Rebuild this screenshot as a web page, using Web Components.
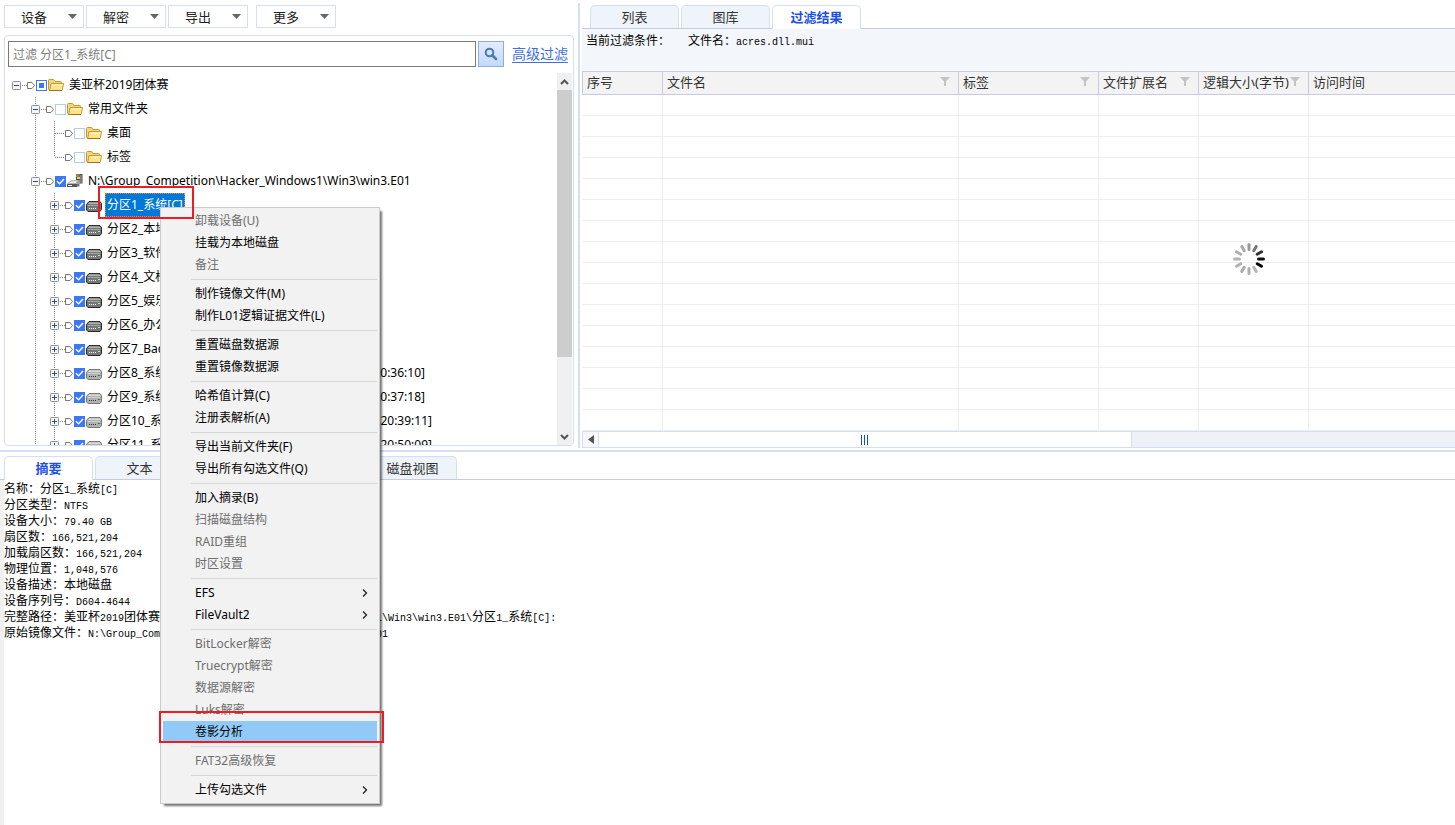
<!DOCTYPE html>
<html lang="zh-CN">
<head>
<meta charset="utf-8">
<title>取证分析</title>
<style>
  html, body { margin: 0; }
  body { font: 12px/16px "Noto Sans", "Noto Sans CJK SC", sans-serif; color: #000; background: #fff; }
  forensic-app { min-height: 100vh; }
  context-menu { left: 160px; top: 207px; }
  .mark-node { left: 98px; top: 186px; width: 92px; height: 29px; }
  .mark-menu { left: 159px; top: 711px; width: 221px; height: 28px; }
</style>
</head>
<body>
<forensic-app>
  <device-pane slot="left">
    <drop-button slot="tools">设备</drop-button>
    <drop-button slot="tools">解密</drop-button>
    <drop-button slot="tools">导出</drop-button>
    <drop-button slot="tools" apart>更多</drop-button>
    <tree-node state="mixed" icon="folder" toggle="minus" root label="美亚杯2019团体赛">
      <tree-node icon="folder" toggle="minus" label="常用文件夹">
        <tree-node icon="folder" label="桌面"></tree-node>
        <tree-node icon="folder" label="标签" last></tree-node>
      </tree-node>
      <tree-node state="checked" icon="image" toggle="minus" label="N:\Group_Competition\Hacker_Windows1\Win3\win3.E01">
        <tree-node state="checked" icon="drive" toggle="plus" label="分区1_系统[C]" selected></tree-node>
        <tree-node state="checked" icon="drive" toggle="plus" label="分区2_本地"></tree-node>
        <tree-node state="checked" icon="drive" toggle="plus" label="分区3_软件"></tree-node>
        <tree-node state="checked" icon="drive" toggle="plus" label="分区4_文档"></tree-node>
        <tree-node state="checked" icon="drive" toggle="plus" label="分区5_娱乐"></tree-node>
        <tree-node state="checked" icon="drive" toggle="plus" label="分区6_办公"></tree-node>
        <tree-node state="checked" icon="drive" toggle="plus" label="分区7_Bac"></tree-node>
        <tree-node state="checked" icon="shadow" toggle="plus" label="分区8_系统" time="20:36:10]"></tree-node>
        <tree-node state="checked" icon="shadow" toggle="plus" label="分区9_系统" time="20:37:18]"></tree-node>
        <tree-node state="checked" icon="shadow" toggle="plus" label="分区10_系统" time="20:39:11]" wide></tree-node>
        <tree-node state="checked" icon="shadow" toggle="plus" label="分区11_系统" time="20:50:09]" wide></tree-node>
      </tree-node>
    </tree-node>
  </device-pane>

  <result-pane slot="right">
    <tab-item slot="tabs">列表</tab-item>
    <tab-item slot="tabs">图库</tab-item>
    <tab-item slot="tabs" active>过滤结果</tab-item>
  </result-pane>

  <detail-pane slot="bottom">
    <tab-item slot="tabs" active>摘要</tab-item>
    <tab-item slot="tabs">文本</tab-item>
    <tab-item slot="tabs" name="十六进制"></tab-item>
    <tab-item slot="tabs" name="预览"></tab-item>
    <tab-item slot="tabs">磁盘视图</tab-item>
    <detail-line>名称：分区<code>1_</code>系统<code>[C]</code></detail-line>
    <detail-line>分区类型：<code>NTFS</code></detail-line>
    <detail-line>设备大小：<code>79.40 GB</code></detail-line>
    <detail-line>扇区数：<code>166,521,204</code></detail-line>
    <detail-line>加载扇区数：<code>166,521,204</code></detail-line>
    <detail-line>物理位置：<code>1,048,576</code></detail-line>
    <detail-line>设备描述：本地磁盘</detail-line>
    <detail-line>设备序列号：<code>D604-4644</code></detail-line>
    <detail-line>完整路径：美亚杯<code>2019</code>团体赛<code>\N:\Group_Competition\Hacker_Windows1\Win3\win3.E01\</code>分区<code>1_</code>系统<code>[C]:</code></detail-line>
    <detail-line>原始镜像文件：<code>N:\Group_Competition\Hacker_Windows1\Win3\win3.E01</code></detail-line>
  </detail-pane>
</forensic-app>

<context-menu>
  <menu-entry disabled>卸载设备(U)</menu-entry>
  <menu-entry>挂载为本地磁盘</menu-entry>
  <menu-entry disabled>备注</menu-entry>
  <menu-rule></menu-rule>
  <menu-entry>制作镜像文件(M)</menu-entry>
  <menu-entry>制作L01逻辑证据文件(L)</menu-entry>
  <menu-rule></menu-rule>
  <menu-entry>重置磁盘数据源</menu-entry>
  <menu-entry>重置镜像数据源</menu-entry>
  <menu-rule></menu-rule>
  <menu-entry>哈希值计算(C)</menu-entry>
  <menu-entry>注册表解析(A)</menu-entry>
  <menu-rule></menu-rule>
  <menu-entry>导出当前文件夹(F)</menu-entry>
  <menu-entry>导出所有勾选文件(Q)</menu-entry>
  <menu-rule></menu-rule>
  <menu-entry>加入摘录(B)</menu-entry>
  <menu-entry disabled>扫描磁盘结构</menu-entry>
  <menu-entry disabled>RAID重组</menu-entry>
  <menu-entry disabled>时区设置</menu-entry>
  <menu-rule></menu-rule>
  <menu-entry more>EFS</menu-entry>
  <menu-entry more>FileVault2</menu-entry>
  <menu-rule></menu-rule>
  <menu-entry disabled>BitLocker解密</menu-entry>
  <menu-entry disabled>Truecrypt解密</menu-entry>
  <menu-entry disabled>数据源解密</menu-entry>
  <menu-entry disabled>Luks解密</menu-entry>
  <menu-entry current>卷影分析</menu-entry>
  <menu-rule></menu-rule>
  <menu-entry disabled>FAT32高级恢复</menu-entry>
  <menu-rule></menu-rule>
  <menu-entry more>上传勾选文件</menu-entry>
</context-menu>
<red-mark class="mark-node"></red-mark>
<red-mark class="mark-menu"></red-mark>

<script>
const define = (name, render, after) => customElements.define(name, class extends HTMLElement {
  constructor() { super(); this.attachShadow({ mode: 'open' }); }
  connectedCallback() {
    if (this.shadowRoot.childNodes.length) return;
    this.shadowRoot.innerHTML = render(this);
    if (after) after(this);
  }
});

const icons = {
  folder: `<svg width="16" height="16" viewBox="0 0 16 16" aria-hidden="true">
    <path d="M.5 12.500V3.500Q.5 2.500 1.500 2.500H5.500L7 4.500H12.500Q13.500 4.500 13.500 5.500V7" fill="#f3d878" stroke="#c6962c"/>
    <path d="M1 13.500Q2.500 12 2.500 9.500V8Q2.500 6.500 4 6.500H15.500L14.500 12.500Q14.300 13.500 13.300 13.500Z" fill="#fbe388" stroke="#c6962c"/>
    <path d="M4 8H14.500" stroke="#fffbe0"/><path d="M2 13.500H14" stroke="#a0701a"/></svg>`,
  image: `<svg width="16" height="16" viewBox="0 0 16 16" aria-hidden="true">
    <path d="M9 1H15.500V10.500H9Z" fill="#4c4c4c"/><path d="M9 1H12.500V4H9Z" fill="#8f8a48"/><path d="M10 4H13V6H10Z" fill="#e4d64c"/>
    <path d="M14 2V10" stroke="#aaa"/><path d="M9 7H13V10H9Z" fill="#999"/>
    <path d="M.5 10.500L5 7.500H11L9 10.500Z" fill="#e8e8e8" stroke="#b5b5b5"/>
    <path d="M0 11H10V14H0Z" fill="#555"/><path d="M1 12.500H5" stroke="#eee"/><path d="M10 11H12.500V13.500H10Z" fill="#777"/></svg>`,
  drive: `<svg width="16" height="16" viewBox="0 0 16 16" aria-hidden="true">
    <path d="M.5 7.500L3 4.500H14L15.500 6.500V12.500L14 14.500H2L.5 13Z" fill="#777" stroke="#2b2b2b"/>
    <path d="M2 7L3.500 5.500H13.500L14.500 7Z" fill="#b5b5b5"/><path d="M1.500 8.500H14" stroke="#a5a5a5"/>
    <path d="M3 11.500H10" stroke="#fff" stroke-dasharray="1 1"/><path d="M12 10.500H14" stroke="#b8f0b8"/></svg>`,
  shadow: `<svg width="16" height="16" viewBox="0 0 16 16" aria-hidden="true">
    <path d="M.5 7.500L3 4.500H14L15.500 6.500V12.500L14 14.500H2L.5 13Z" fill="#b0b0b0" stroke="#7a7a7a"/>
    <path d="M2 7L3.500 5.500H13.500L14.500 7Z" fill="#dcdcdc"/><path d="M1.500 8.500H14" stroke="#d0d0d0"/>
    <path d="M3 11.500H10" stroke="#333" stroke-dasharray="1 1"/><path d="M12 10.500H14" stroke="#387838"/></svg>`
};

define('forensic-app', () => `
  <style>
    :host { display: flex; flex-direction: column; }
    .top { display: flex; padding-bottom: 2px; }
    .left { flex: 0 0 578px; display: flex; }
    .bar { flex: 0 0 2px; margin: 3px 0 0; background: #d5dfef; }
    .right { flex: 1; min-width: 0; }
    .split { height: 2px; background: #d5dfef; }
    .bottom { flex: 1; display: flex; }
    ::slotted(*) { flex: 1; min-width: 0; }
  </style>
  <div class="top"><div class="left"><slot name="left"></slot></div><div class="bar"></div>
  <div class="right"><slot name="right"></slot></div></div>
  <div class="split"></div>
  <div class="bottom"><slot name="bottom"></slot></div>`);

define('drop-button', () => `
  <style>
    :host { display: block; }
    :host([apart]) { margin-left: 6px; }
    button { display: flex; align-items: center; justify-content: space-between; box-sizing: border-box;
      width: 80px; height: 23px; padding: 0 6px 0 16px; border: 1px solid #d5dfef; background: #fff;
      font: inherit; font-size: 13px; color: #222; }
  </style>
  <button type="button"><slot></slot><svg width="9" height="5" viewBox="0 0 9 5" aria-hidden="true"><path d="M0 0H9L4.500 5Z" fill="#666"/></svg></button>`);

define('device-pane', () => `
  <style>
    :host { display: flex; flex-direction: column; }
    .tools { display: flex; gap: 2px; padding: 5px 4px 7px; }
    .panel { flex: 1; display: flex; flex-direction: column; margin: 0 4px 2px;
      border: 1px solid #d5dfef; border-radius: 4px; }
    .search { display: flex; align-items: center; gap: 2px; padding: 5px 5px 6px 3px; }
    input { flex: 1; min-width: 0; box-sizing: border-box; height: 26px; padding: 0 4px; border: 1px solid #7a7a7a;
      font: inherit; background: #fff; }
    input::placeholder { color: #808080; }
    button { width: 26px; height: 26px; padding: 0; border: 1px solid #8faed6;
      background: linear-gradient(#e2edfd, #c3d9fb); display: grid; place-items: center; }
    a { margin-left: 6px; font-size: 14px; color: #3c6fe0; text-underline-offset: 3px; }
    .body { flex: 1; display: flex; min-height: 0; }
    .tree { flex: 1; contain: size; overflow: hidden; padding-left: 7px; }
  </style>
  <div class="tools"><slot name="tools"></slot></div>
  <div class="panel">
    <div class="search">
      <input type="text" aria-label="过滤" placeholder="过滤 分区1_系统[C]">
      <button type="button" aria-label="搜索"><svg width="14" height="14" viewBox="0 0 14 14"><circle cx="5.500" cy="5.500" r="3.800" fill="none" stroke="#4a78b5" stroke-width="2"/><path d="M8.500 8.500L12 12" stroke="#4a78b5" stroke-width="2.500" stroke-linecap="round"/></svg></button>
      <a href="#advanced">高级过滤</a>
    </div>
    <div class="body"><div class="tree" role="tree"><slot></slot></div><v-scroll></v-scroll></div>
  </div>`);

define('v-scroll', () => `
  <style>
    :host { display: flex; flex-direction: column; width: 15px; margin-right: 1px; background: #f0f0f0; }
    button { height: 17px; padding: 0; border: 0; background: none; display: grid; place-items: center; }
    .track { flex: 1; }
    .thumb { height: 79%; background: #cdcdcd; }
  </style>
  <button type="button" aria-label="向上"><svg width="9" height="6" viewBox="0 0 9 6"><path d="M1 5L4.500 1.500L8 5" fill="none" stroke="#555" stroke-width="2"/></svg></button>
  <div class="track"><div class="thumb"></div></div>
  <button type="button" aria-label="向下"><svg width="9" height="6" viewBox="0 0 9 6"><path d="M1 1L4.500 4.500L8 1" fill="none" stroke="#555" stroke-width="2"/></svg></button>`);

define('tree-node', el => {
  const toggle = el.getAttribute('toggle');
  const time = el.getAttribute('time');
  return `
  <style>
    :host { display: block; background: repeating-linear-gradient(#808080 0 1px, transparent 1px 2px) 4px 0 / 1px 100% no-repeat; }
    :host([last]) { background-size: 1px 12px; }
    :host([root]) { background: none; }
    .row { display: flex; align-items: center; height: 24px; }
    .box { flex: none; display: grid; width: 9px; height: 9px; padding: 0; border: 0; }
    .dots { width: 6px; height: 1px; background: repeating-linear-gradient(90deg, transparent 0 1px, #808080 1px 2px); }
    .dots.leaf { width: 11px; margin-left: 4px; }
    .tag { display: block; margin-right: 1px; }
    label { display: flex; align-items: center; white-space: nowrap; }
    input { appearance: none; flex: none; width: 11px; height: 11px; margin: 0 1px 0 0; box-sizing: border-box;
      border: 1px solid #b3cbfb; background: #fff; }
    input.checked { border-color: #3a78f8; background: #3a78f8 url("data:image/svg+xml,%3Csvg xmlns='http://www.w3.org/2000/svg' viewBox='0 0 9 9'%3E%3Cpath d='M1 4.300L3.600 6.800L8 2' fill='none' stroke='white' stroke-width='1.500'/%3E%3C/svg%3E"); }
    input.mixed { border-color: #3a78f8; background: linear-gradient(#3a78f8, #3a78f8) center / 5px 5px no-repeat #fff; }
    .name { box-sizing: border-box; margin-left: 3px; padding: 0 2px; line-height: 24px; display: flex; justify-content: space-between; }
    :host([time]) .name { width: 322px; }
    :host([wide]) .name { width: 329px; }
    :host([selected]) .name { background: #0078d7; color: #fff; outline: 1px dotted #ff8728; outline-offset: -1px; }
    .kids { margin-left: 19px; }
    svg { flex: none; }
  </style>
  <div class="row" role="treeitem">
    ${toggle ? `<button class="box" type="button" aria-label="展开或折叠"><svg width="9" height="9" viewBox="0 0 9 9"><rect x=".5" y=".5" width="8" height="8" rx="1" fill="#f4f4f4" stroke="#919191"/><path d="${toggle === 'plus' ? 'M2 4.500H7M4.500 2V7' : 'M2 4.500H7'}" stroke="#2a4a9c"/></svg></button><span class="dots"></span>` : '<span class="dots leaf"></span>'}
    <svg class="tag" width="8" height="7" viewBox="0 0 8 7" aria-hidden="true"><path d="M.5 .5H5L7.500 3.500L5 6.500H.5Z" fill="#fff" stroke="#777"/></svg>
    <label><input type="checkbox" class="${el.getAttribute('state') || ''}">${icons[el.getAttribute('icon')]}<span class="name"><span></span>${time ? `<span>${time}</span>` : ''}</span></label>
  </div>
  <div class="kids" role="group"><slot></slot></div>`;
}, el => {
  el.shadowRoot.querySelector('.name span').textContent = el.getAttribute('label');
  const state = el.getAttribute('state');
  const input = el.shadowRoot.querySelector('input');
  input.checked = state === 'checked';
  input.indeterminate = state === 'mixed';
});

define('tab-item', el => `
  <style>
    :host { display: block; }
    button { display: block; box-sizing: border-box; width: 89px; height: 23px; padding: 0; border: 1px solid #d3dff0; border-bottom: 0;
      border-radius: 5px 5px 0 0; background: #eff3fa; font: inherit; font-size: 13px; color: #333; }
    :host([active]) button { height: 24px; padding-bottom: 2px; background: #fff; color: #1c4fe6; font-weight: bold; }
    :host([active]) { margin-bottom: -1px; }
  </style>
  <button type="button" role="tab" ${el.getAttribute('name') ? `aria-label="${el.getAttribute('name')}"` : ''}><slot></slot></button>`);

define('detail-line', () => `
  <style>
    :host { display: block; height: 16px; font-size: 12px; line-height: 16px; white-space: nowrap; }
    ::slotted(code) { font: 10px/16px "Liberation Mono", monospace; }
  </style><slot></slot>`);

define('result-pane', () => {
  const heads = [['序号', 0], ['文件名', 1], ['标签', 1], ['文件扩展名', 1], ['逻辑大小(字节)', 1], ['访问时间', 0]];
  const funnel = '<svg width="10" height="10" viewBox="0 0 10 10" aria-hidden="true"><path d="M0 0H10L6 4.500V9H4V4.500Z" fill="#c4c4c4"/></svg>';
  return `
  <style>
    :host { display: block; position: relative; padding-left: 2px; }
    .tabs { display: flex; align-items: flex-end; gap: 2px; padding: 5px 8px 0; border-bottom: 1px solid #c9cadd; }
    .info { display: flex; gap: 18px; box-sizing: border-box; height: 42px; padding: 4px 4px; background: #f3f6fb; }
    table { width: 100%; table-layout: fixed; border-collapse: separate; border-spacing: 0; }
    th { box-sizing: border-box; height: 24px; padding: 0 8px 2px 4px; border: solid #c9cadd; border-width: 1px 0 1px 1px;
      background: #f3f3f3; font-size: 13px; font-weight: normal; color: #333; text-align: left; white-space: nowrap; }
    th div { display: flex; align-items: center; justify-content: space-between; }
    td { box-sizing: border-box; height: 21px; padding: 0; border: solid #eee; border-width: 0 0 1px 1px; }
    td:first-child { border-left-color: #fff; }
    load-spinner { left: 76%; top: 242px; }
  </style>
  <div class="tabs" role="tablist"><slot name="tabs"></slot></div>
  <div class="info"><detail-line>当前过滤条件：</detail-line><detail-line>文件名：<code>acres.dll.mui</code></detail-line></div>
  <table>
    <colgroup><col style="width:80px"><col style="width:296px"><col style="width:140px"><col style="width:100px"><col style="width:110px"><col></colgroup>
    <thead><tr>${heads.map(([t, f]) => `<th><div><span>${t}</span>${f ? funnel : ''}</div></th>`).join('')}</tr></thead>
    <tbody>${('<tr>' + '<td></td>'.repeat(6) + '</tr>').repeat(16)}</tbody>
  </table>
  <h-scroll></h-scroll>
  <load-spinner></load-spinner>`;
});

define('h-scroll', () => `
  <style>
    :host { display: flex; box-sizing: border-box; height: 17px; border: 1px solid #d5dfef; border-right: 0; background: #eef1f7; }
    button { width: 16px; padding: 0; border: 0; border-right: 1px solid #d5dfef; background: #f6f8fc; display: grid; place-items: center; }
    .thumb { width: 61%; border-right: 1px solid #d5dfef; background: #fff; display: grid; place-items: center; }
  </style>
  <button type="button" aria-label="向左"><svg width="6" height="9" viewBox="0 0 6 9"><path d="M6 0V9L0 4.500Z" fill="#555"/></svg></button>
  <div class="thumb"><svg width="7" height="10" viewBox="0 0 7 10" aria-hidden="true"><path d="M.5 0V10M3.500 0V10M6.500 0V10" stroke="#1a579f"/></svg></div>`);

define('load-spinner', () => {
  const shades = ['#999', '#777', '#333', '#111', '#000', '#b4b4b4', '#b0b0b0', '#acacac', '#b0b0b0', '#b4b4b4', '#b0b0b0', '#a8a8a8'];
  return `
  <style>:host { display: block; position: absolute; width: 34px; height: 34px; margin-left: -13px; } svg { display: block; }</style>
  <svg width="34" height="34" viewBox="-17 -17 34 34" role="img" aria-label="加载中">${shades.map((c, i) => `<path d="M0 -9.500V-14.500" stroke="${c}" stroke-width="3" stroke-linecap="round" transform="rotate(${i * 30})"/>`).join('')}</svg>`;
});

define('detail-pane', () => `
  <style>
    :host { display: flex; flex-direction: column; }
    .tabs { display: flex; align-items: flex-end; gap: 2px; padding: 4px 4px 0; border-bottom: 1px solid #c9cadd; }
    .text { flex: 1; border-left: 4px solid #f0f0f0; padding: 1px 0 0; }
  </style>
  <div class="tabs" role="tablist"><slot name="tabs"></slot></div>
  <div class="text"><slot></slot></div>`);

define('context-menu', () => `
  <style>
    :host { display: block; position: absolute; box-sizing: border-box; width: 220px; padding: 2px; border: 1px solid #ccc;
      background: #f2f2f2; box-shadow: 3px 3px 2px -1px rgba(0, 0, 0, .55); }
  </style><div role="menu"><slot></slot></div>`);

define('menu-entry', el => `
  <style>
    :host { display: block; }
    button { display: flex; align-items: center; justify-content: space-between; width: 100%; height: 22px; border: 0;
      padding: 0 9px 0 32px; background: none; font: inherit; color: #000; text-align: left; }
    :host([disabled]) button { color: #6d6d6d; }
    :host([current]) button { background: #91c9f7; }
  </style>
  <button type="button" role="menuitem" ${el.hasAttribute('disabled') ? 'disabled' : ''}><slot></slot>${el.hasAttribute('more') ? '<svg width="6" height="8" viewBox="0 0 6 8" aria-hidden="true"><path d="M1 .5L4.500 4L1 7.500" fill="none" stroke="#222" stroke-width="1.300"/></svg>' : ''}</button>`);

define('menu-rule', () => `
  <style>:host { display: block; height: 1px; margin: 3px 0 3px 28px; background: #d7d7d7; }</style>`);

define('red-mark', () => `
  <style>:host { display: block; position: absolute; border: 2px solid #ed1c24; pointer-events: none; }</style>`);
</script>
</body>
</html>
